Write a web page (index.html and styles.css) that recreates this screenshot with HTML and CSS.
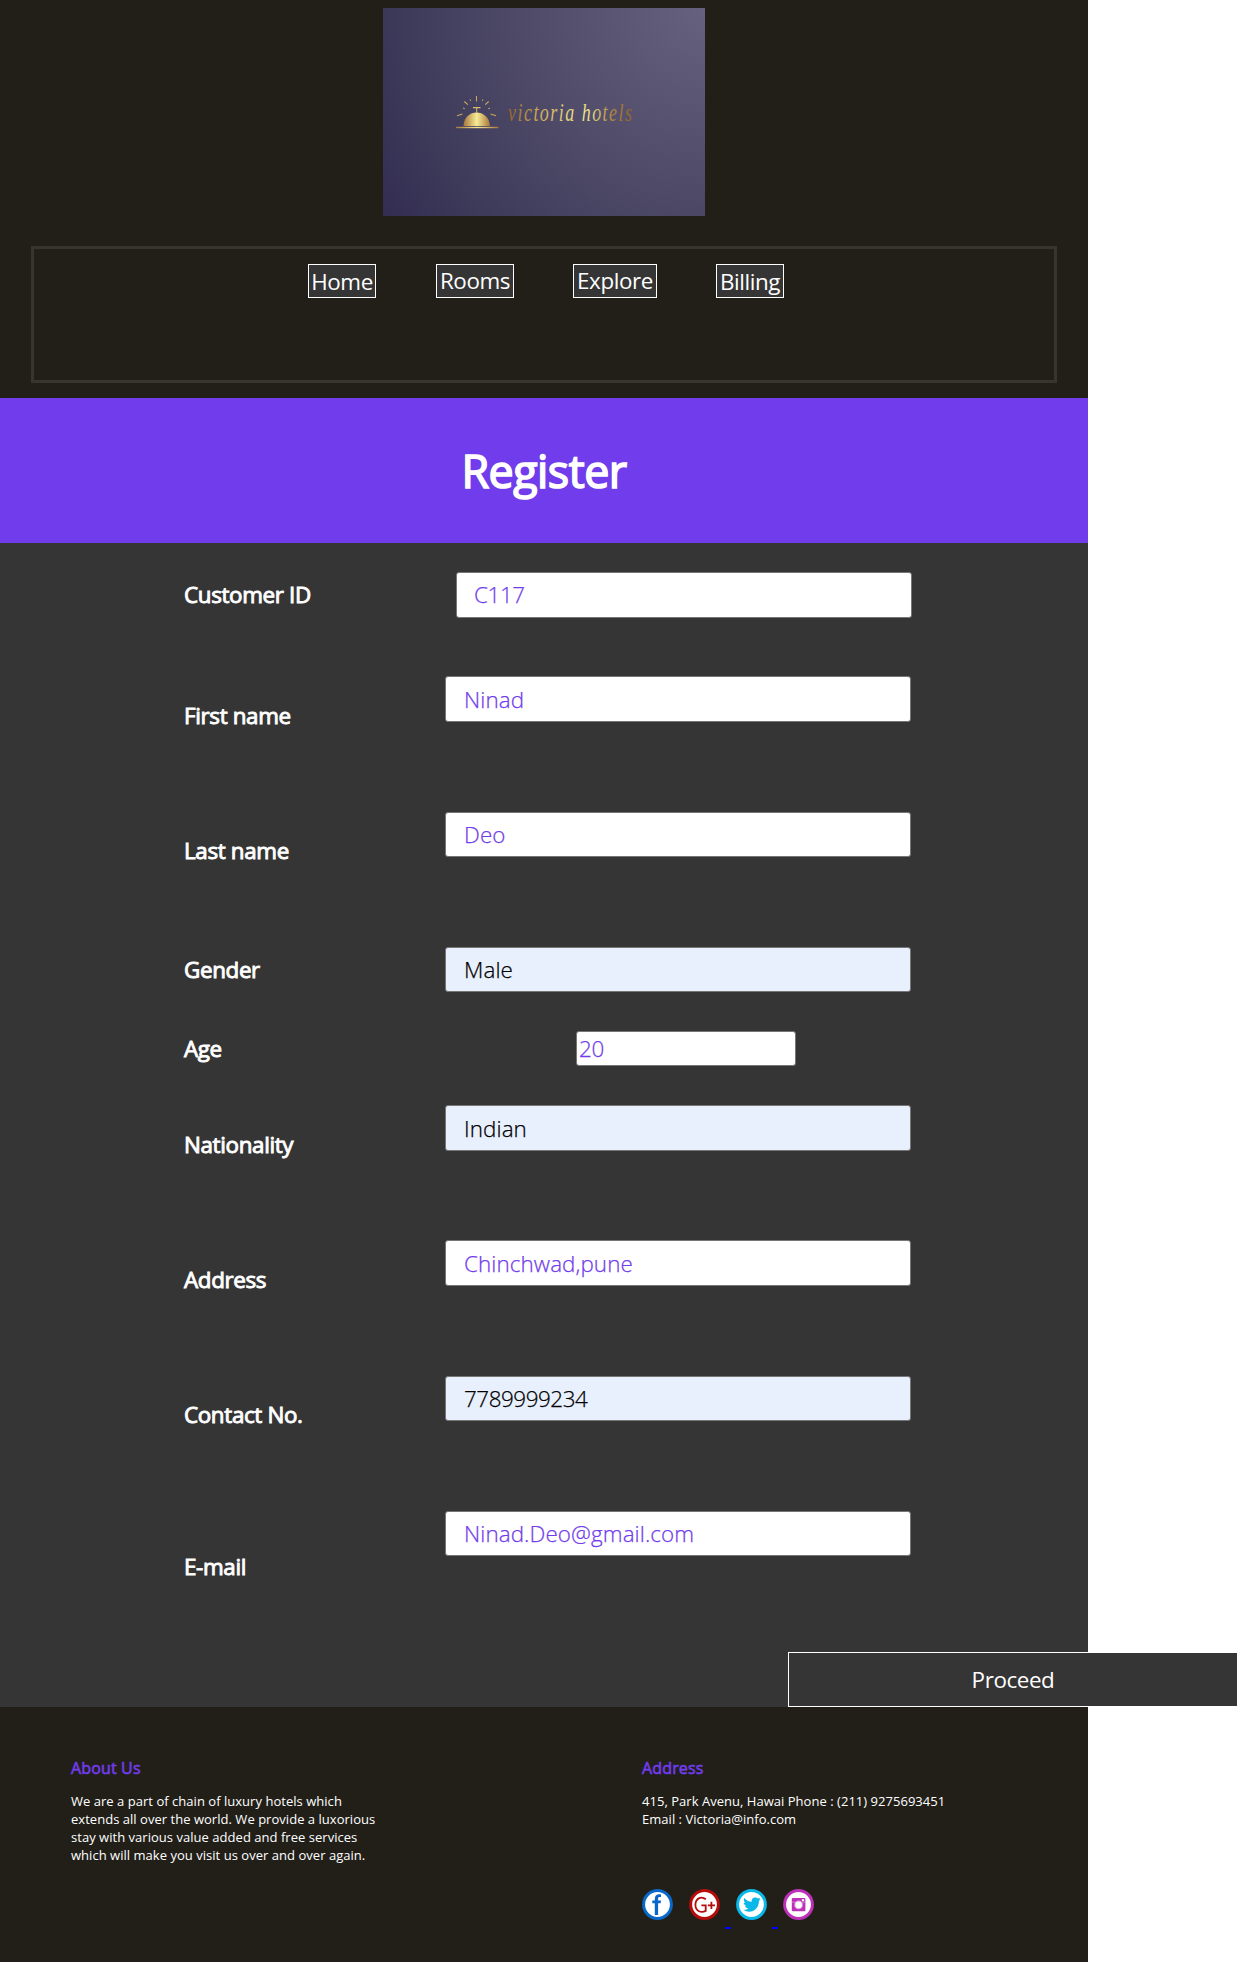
FILE: index.html
```html
<!DOCTYPE html>
<html lang="en">
<head>
<meta charset="utf-8">
<title>Victoria Hotels - Register</title>
<link rel="stylesheet" href="styles.css">
</head>
<body>
<div class="page">
  <header class="header">
    <svg class="logo" viewBox="0 0 322 208" role="img" aria-label="victoria hotels">
      <defs>
        <radialGradient id="sky" gradientUnits="userSpaceOnUse" cx="322" cy="0" r="383">
          <stop offset="0" stop-color="#65617e"/><stop offset=".5" stop-color="#4d4967"/><stop offset=".8" stop-color="#3d3959"/><stop offset="1" stop-color="#332e52"/>
        </radialGradient>
        <linearGradient id="gold"><stop offset="0" stop-color="#a6763b"/><stop offset=".5" stop-color="#f8ec95"/><stop offset="1" stop-color="#a6763b"/></linearGradient>
        <linearGradient id="script" gradientUnits="userSpaceOnUse" x1="125" y1="0" x2="252" y2="0"><stop offset="0" stop-color="#93612e"/><stop offset=".22" stop-color="#c8a655"/><stop offset=".5" stop-color="#e6d880"/><stop offset=".63" stop-color="#efe28a"/><stop offset=".8" stop-color="#b48a45"/><stop offset="1" stop-color="#8e5c2b"/></linearGradient>
      </defs>
      <rect width="322" height="208" fill="url(#sky)"/>
      <path d="M80.500 118C81 100 106 100 107 118Z" fill="url(#gold)"/>
      <rect x="73" y="118.800" width="42.500" height="1.400" fill="url(#gold)"/>
      <path d="M90 99h7.500v1.300h-3.300v5h-1v-5H90z" fill="#d9bd6b"/>
      <path d="M93.500 88v5.500M81.300 93.500l3.500 3.200M105.700 93.500l-3.500 3.200M74 107.700l5.400-1.700M113 107.700l-5.400-1.700M87 91.500l.8 1.300M100 91.500l-.8 1.300M80.200 100l1.500.7M106.800 100l-1.500.7" stroke="#c9a85b" stroke-width="1.100" fill="none"/>
      <g transform="translate(0 112.500) scale(1 1.350)"><text class="logo-text" x="125" y="0" textLength="124" lengthAdjust="spacing" fill="url(#script)">victoria hotels</text></g>
    </svg>
    <nav class="nav">
      <a class="nav-link home">Home</a>
      <a class="nav-link rooms">Rooms</a>
      <a class="nav-link explore">Explore</a>
      <a class="nav-link billing">Billing</a>
    </nav>
  </header>
  <div class="banner"><h1>Register</h1></div>
  <form class="form">
    <div class="row customer"><label>Customer ID</label><input value="C117"></div>
    <div class="row first"><label>First name</label><input value="Ninad"></div>
    <div class="row last"><label>Last name</label><input value="Deo"></div>
    <div class="row gender"><label>Gender</label><input class="autofill" value="Male"></div>
    <div class="row age"><label>Age</label><input value="20"></div>
    <div class="row nationality"><label>Nationality</label><input class="autofill" value="Indian"></div>
    <div class="row address"><label>Address</label><input value="Chinchwad,pune"></div>
    <div class="row contact"><label>Contact No.</label><input class="autofill" value="7789999234"></div>
    <div class="row email"><label>E-mail</label><input value="Ninad.Deo@gmail.com"></div>
    <button class="proceed" type="button">Proceed</button>
  </form>
  <footer class="footer">
    <section class="about">
      <h2>About Us</h2>
      <p>We are a part of chain of luxury hotels which<br>extends all over the world. We provide a luxorious<br>stay with various value added and free services<br>which will make you visit us over and over again.</p>
    </section>
    <section>
      <h2>Address</h2>
      <p>415, Park Avenu, Hawai Phone : (211) 9275693451<br>Email : Victoria@info.com</p>
      <div class="social">
        <svg viewBox="0 0 31 31"><circle cx="15.500" cy="15.500" r="13.900" fill="#fff" stroke="#0867c8" stroke-width="3"/><path d="M12.800 26V14.300H10.300V11.500h2.500V10c0-3.300 1.600-4.800 4.300-4.800.8 0 1.500.1 1.900.2v2.700h-1.300c-1.200 0-1.600.6-1.600 1.700v1.700H19l-.4 2.800h-2.500V26z" fill="#0867c8"/></svg>
        <svg viewBox="0 0 31 31"><circle cx="15.500" cy="15.500" r="13.900" fill="#fff" stroke="#b50d0d" stroke-width="3"/><path d="M16.800 10.300C11.800 6.300 6.400 10 6.400 15.800c0 6.600 6 8.400 10.300 6.100v-5.600h-4.300M18.800 16.400h7.200M22.400 12.800v7.200" fill="none" stroke="#b50d0d" stroke-width="1.800"/></svg>
        <span class="dash"></span>
        <svg viewBox="0 0 31 31"><circle cx="15.500" cy="15.500" r="13.900" fill="#fff" stroke="#07b8e9" stroke-width="3"/><path d="M7.500 20.800c2 .2 3.600-.3 5-1.300-1.700-.1-2.900-1.100-3.400-2.500h1.500c-1.700-.5-2.800-1.900-2.800-3.600.5.3 1 .4 1.600.5-1.700-1.300-2-3.200-1.100-4.900 1.900 2.300 4.300 3.600 7.500 3.800-.5-2.500 1.200-4.300 3.500-4.300 1.100 0 2 .4 2.600 1.100l2.300-.9c-.3.900-.9 1.500-1.600 2l2-.6c-.4.800-1 1.500-1.700 2 0 6.800-4.500 10.600-9.500 10.600-2.200 0-4.300-.7-5.900-1.900z" fill="#07b8e9"/></svg>
        <span class="dash"></span>
        <svg viewBox="0 0 31 31"><circle cx="15.500" cy="15.500" r="13.900" fill="#fff" stroke="#bd30b8" stroke-width="3"/><rect x="8.800" y="9" width="13.600" height="13.200" rx="1" fill="#bd30b8"/><path d="M9 13.200h3M19 13.200h3.200" stroke="#e3a4df" stroke-width=".7"/><circle cx="15.600" cy="15.900" r="4.300" fill="#e3a4df"/><circle cx="15.600" cy="15.900" r="3.300" fill="#fff"/><rect x="18.900" y="10.200" width="2.200" height="2" fill="#fff"/></svg>
      </div>
    </section>
  </footer>
</div>
</body>
</html>
```
FILE: styles.css
```css
* { box-sizing: border-box; }
body { margin: 0; background: #fff; font-family: "Open Sans", sans-serif; font-size: 22.4px; color: #fff; }
h1, h2, p { margin: 0; }
.page { width: 1088px; height: 1962px; background: #221f19; }
.header { height: 398px; padding: 8px 31px 0; display: flex; flex-direction: column; align-items: center; }
.logo { display: block; width: 322px; height: 208px; }
.logo-text { font: italic 18px "Liberation Serif", serif; }
.nav { width: 1026px; height: 137px; margin-top: 30px; border: 3px solid #38352f; padding: 15px 0 0 274px; display: flex; align-items: flex-start; }
.nav-link { height: 34px; border: 1px solid #fff; background: #353535; text-align: center; line-height: 31px; letter-spacing: -.4px; white-space: nowrap; }
.home { width: 68px; margin-right: 60px; line-height: 33px; }
.rooms { width: 78px; margin-right: 59px; }
.explore { width: 84px; margin-right: 59px; }
.billing { width: 68px; line-height: 33px; }
.banner { height: 145px; background: #713ceb; display: flex; justify-content: center; align-items: center; }
h1 { font-size: 44.8px; font-weight: 400; line-height: 60px; letter-spacing: -.5px; -webkit-text-stroke: 1.6px #fff; }
.form { height: 1164px; background: #353535; padding-top: 29px; }
.row { display: flex; align-items: flex-start; padding-left: 184px; }
.row label { width: 261px; line-height: 30px; letter-spacing: -.35px; -webkit-text-stroke: .9px #fff; }
.row input { width: 466px; height: 46px; border: 1px solid #767676; border-radius: 3px; padding: 0 18px; background: #fff; color: #713ceb; font: 300 22.4px "Open Sans", sans-serif; letter-spacing: .1px; -webkit-text-stroke: .25px currentColor; }
.row input.autofill { background: #e8effd; color: #000; }
.customer { height: 104px; }
.customer label { width: 272px; margin-top: 8px; }
.customer input { width: 456px; padding: 0 17px 1px; letter-spacing: -.4px; }
.first { height: 136px; }
.first label, .address label { margin-top: 25px; }
.last label, .contact label { margin-top: 24px; }
.last { height: 135px; }
.gender { height: 84px; }
.gender label { margin-top: 8px; }
.last input, .gender input, .contact input, .email input { height: 45px; }
.contact .autofill { letter-spacing: -.45px; }
.age { height: 74px; }
.age label { width: 392px; margin-top: 3px; }
.age input { width: 220px; height: 35px; padding: 0 2px; letter-spacing: -.4px; }
.nationality { height: 135px; }
.nationality label { margin-top: 25px; }
.address { height: 136px; }
.contact { height: 135px; }
.email { height: 141px; }
.email label { margin-top: 41px; }
.proceed { display: block; margin: 0 0 0 788px; width: 450px; height: 55px; border: 1px solid #fff; background: #353535; color: #fff; padding: 0; font: 22.4px "Open Sans", sans-serif; letter-spacing: -.4px; }
.footer { display: flex; padding: 49px 0 0 71px; }
.about { width: 571px; }
h2 { font-size: 16px; font-weight: 400; line-height: 24px; letter-spacing: .15px; color: #713ceb; -webkit-text-stroke: .6px #713ceb; }
.footer p { margin-top: 12px; font-size: 13px; line-height: 18px; letter-spacing: .03px; white-space: nowrap; }
.social { display: flex; margin-top: 61px; height: 40px; gap: 5px; align-items: flex-start; }
.social svg { width: 31px; height: 31px; }
.social svg:first-child { margin-right: 11px; }
.dash { width: 6px; height: 2px; margin-top: 38px; background: #00f; }
```
